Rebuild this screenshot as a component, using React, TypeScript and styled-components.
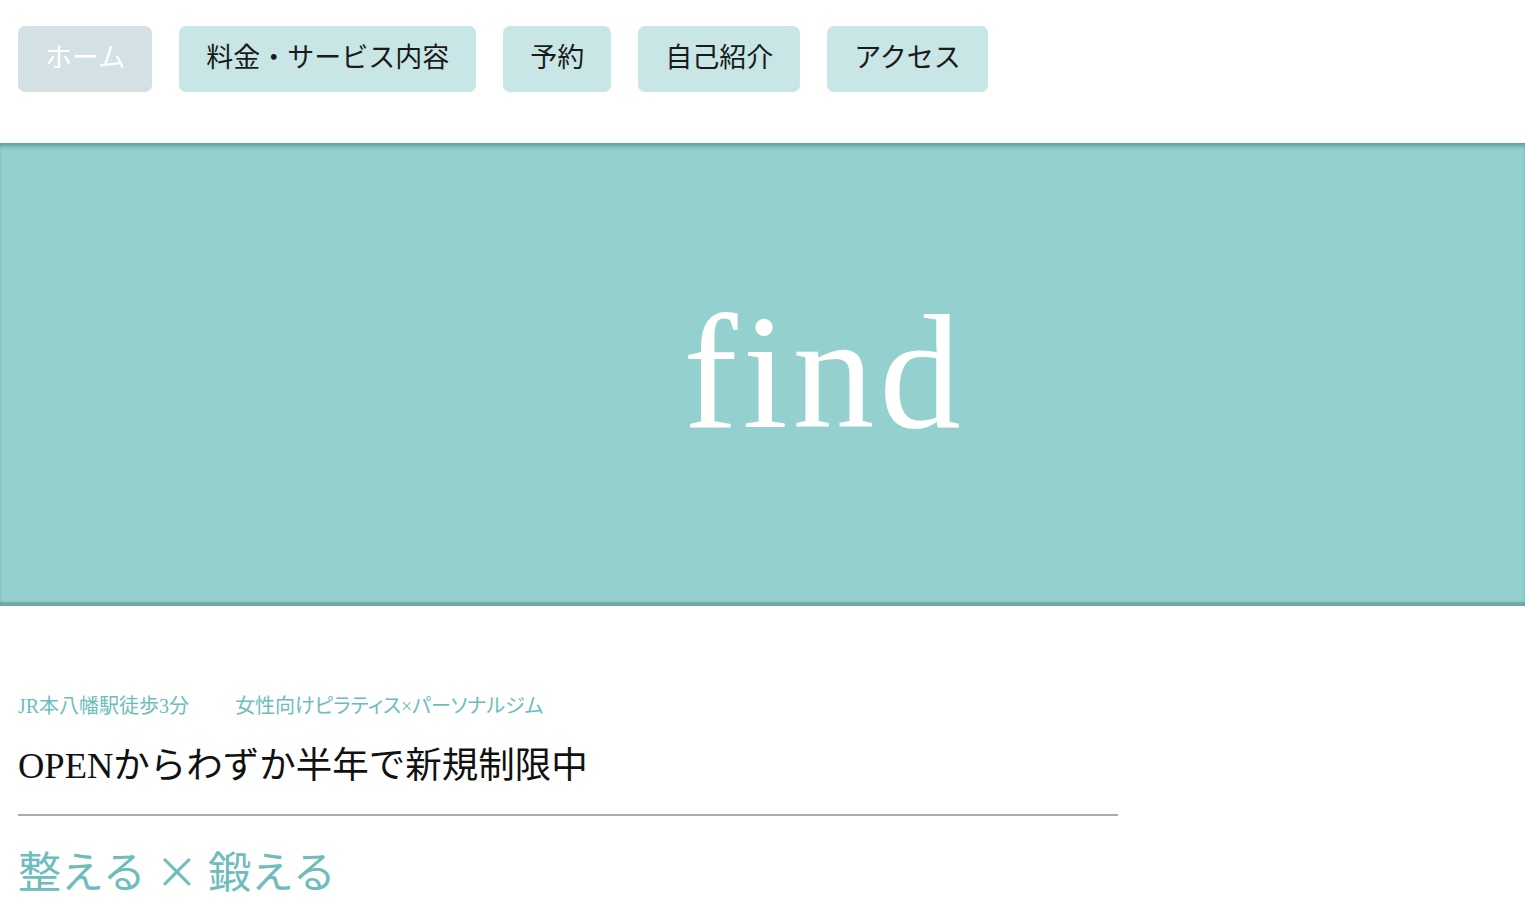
import styled, { createGlobalStyle } from "styled-components";

const GlobalStyle = createGlobalStyle`
  html, body {
    margin: 0;
    padding: 0;
    background: #ffffff;
  }
  body {
    font-family: "Noto Sans CJK JP", "Noto Sans", sans-serif;
    color: #111;
  }
`;

const Header = styled.header`
  padding: 26px 18px 51px;
`;

const Nav = styled.nav`
  display: flex;
  gap: 27px;
`;

const NavButton = styled.a<{ $current?: boolean }>`
  display: flex;
  align-items: center;
  justify-content: center;
  box-sizing: border-box;
  height: 66px;
  padding: 0 27px 8px;
  border-radius: 7px;
  font-size: 27px;
  line-height: 1;
  text-decoration: none;
  background: ${({ $current }) => ($current ? "#d3e0e4" : "#c8e6e6")};
  color: ${({ $current }) => ($current ? "#ffffff" : "#1a1a1a")};
  cursor: pointer;
`;

const Hero = styled.section`
  height: 463px;
  display: flex;
  align-items: center;
  justify-content: center;
  background: #93d0ce;
  box-shadow: inset 0 5px 4px -2px rgba(60, 110, 108, 0.55),
    inset 0 -5px 2px -1px rgba(70, 120, 118, 0.45);
`;

const Logo = styled.h1`
  margin: 0 0 0 124px;
  padding-bottom: 4px;
  font-family: "Liberation Serif", "Times New Roman", serif;
  font-weight: 400;
  font-size: 163px;
  letter-spacing: 5px;
  line-height: 1;
  color: #ffffff;
  font-variant-ligatures: common-ligatures;
`;

const Intro = styled.section`
  padding: 86px 18px 0;
  width: 1100px;
`;

const Tags = styled.div`
  display: flex;
  gap: 46px;
  margin-top: 1px;
  font-size: 20px;
  line-height: 26px;
  color: #6dbdbc;
  font-family: "Liberation Serif", "Noto Sans CJK JP", serif;
  font-feature-settings: "palt";
`;

const Lead = styled.h2`
  margin: 24px 0 0;
  padding-bottom: 25px;
  border-bottom: 2px solid #ababab;
  font-family: "Liberation Serif", "Noto Sans CJK JP", serif;
  font-weight: 400;
  font-size: 36.5px;
  line-height: 46px;
  color: #111;
`;

const Catch = styled.p`
  margin: 25px 0 0;
  font-size: 43px;
  line-height: 56px;
  font-weight: 400;
  color: #6dbdbc;
`;

const links = ["料金・サービス内容", "予約", "自己紹介", "アクセス"];

export default function App() {
  return (
    <>
      <GlobalStyle />
      <Header>
        <Nav>
          <NavButton $current>ホーム</NavButton>
          {links.map((label) => (
            <NavButton key={label}>{label}</NavButton>
          ))}
        </Nav>
      </Header>
      <Hero>
        <Logo>find</Logo>
      </Hero>
      <Intro>
        <Tags>
          <span>JR本八幡駅徒歩3分</span>
          <span>女性向けピラティス×パーソナルジム</span>
        </Tags>
        <Lead>OPENからわずか半年で新規制限中</Lead>
        <Catch>整える × 鍛える</Catch>
      </Intro>
    </>
  );
}
